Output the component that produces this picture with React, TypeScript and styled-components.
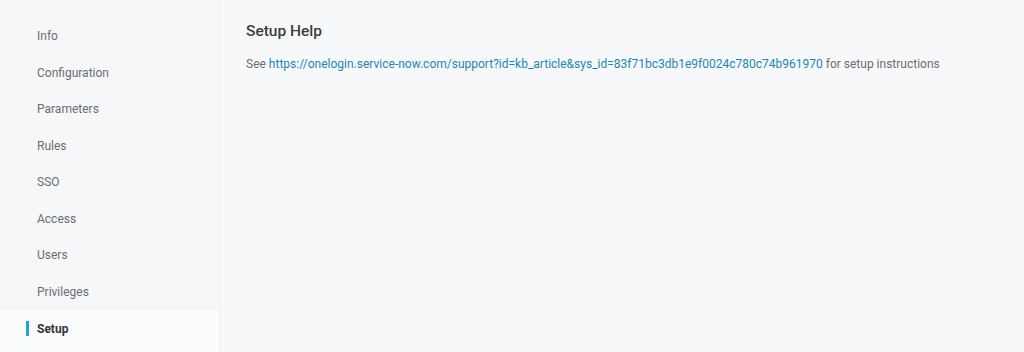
import styled, { createGlobalStyle } from 'styled-components';

const GlobalStyle = createGlobalStyle`
  html, body {
    margin: 0;
    padding: 0;
    background: #f7f8fa;
    font-family: Roboto, 'Liberation Sans', sans-serif;
  }
`;

const NAV_ITEMS = [
  'Info',
  'Configuration',
  'Parameters',
  'Rules',
  'SSO',
  'Access',
  'Users',
  'Privileges',
  'Setup',
];

export default function App() {
  const active = 'Setup';

  return (
    <>
      <GlobalStyle />
      <Layout>
        <Sidebar>
          <NavList>
            {NAV_ITEMS.map((item) => (
              <NavItem key={item} $active={item === active}>
                {item}
              </NavItem>
            ))}
          </NavList>
        </Sidebar>
        <Content>
          <Heading>Setup Help</Heading>
          <Body>
            See{' '}
            <Link href="#">
              https://onelogin.service-now.com/support?id=kb_article&amp;sys_id=83f71bc3db1e9f0024c780c74b961970
            </Link>{' '}
            for setup instructions
          </Body>
        </Content>
      </Layout>
    </>
  );
}

const Layout = styled.div`
  display: flex;
  height: 352px;
  overflow: hidden;
`;

const Sidebar = styled.nav`
  width: 219px;
  flex-shrink: 0;
  background: #f6f7f9;
  border-right: 1px solid #eef0f3;
  padding-top: 18px;
  box-sizing: content-box;
`;

const NavList = styled.ul`
  list-style: none;
  margin: 0;
  padding: 0;
`;

const NavItem = styled.li<{ $active?: boolean }>`
  position: relative;
  height: 36.5px;
  display: flex;
  align-items: center;
  padding-left: 37px;
  font-size: 12px;
  color: ${(p) => (p.$active ? '#333639' : '#6b6e72')};
  font-weight: ${(p) => (p.$active ? 700 : 400)};
  background: ${(p) => (p.$active ? '#fbfcfc' : 'transparent')};
  cursor: pointer;

  &:last-child {
    height: 45px;
    padding-bottom: 8px;
    box-sizing: border-box;
  }

  &::before {
    content: '';
    display: ${(p) => (p.$active ? 'block' : 'none')};
    position: absolute;
    left: 26px;
    top: 11px;
    width: 3px;
    height: 15px;
    background: #1fa6d6;
  }
`;

const Content = styled.main`
  flex: 1;
  padding: 22px 26px;
`;

const Heading = styled.h2`
  margin: 0 0 14px;
  font-size: 15.5px;
  font-weight: 500;
  color: #3b3e42;
  line-height: 19px;
`;

const Body = styled.p`
  margin: 0;
  font-size: 12px;
  line-height: 18px;
  color: #6b6e72;
`;

const Link = styled.a`
  color: #1a89b5;
  text-decoration: none;
`;
